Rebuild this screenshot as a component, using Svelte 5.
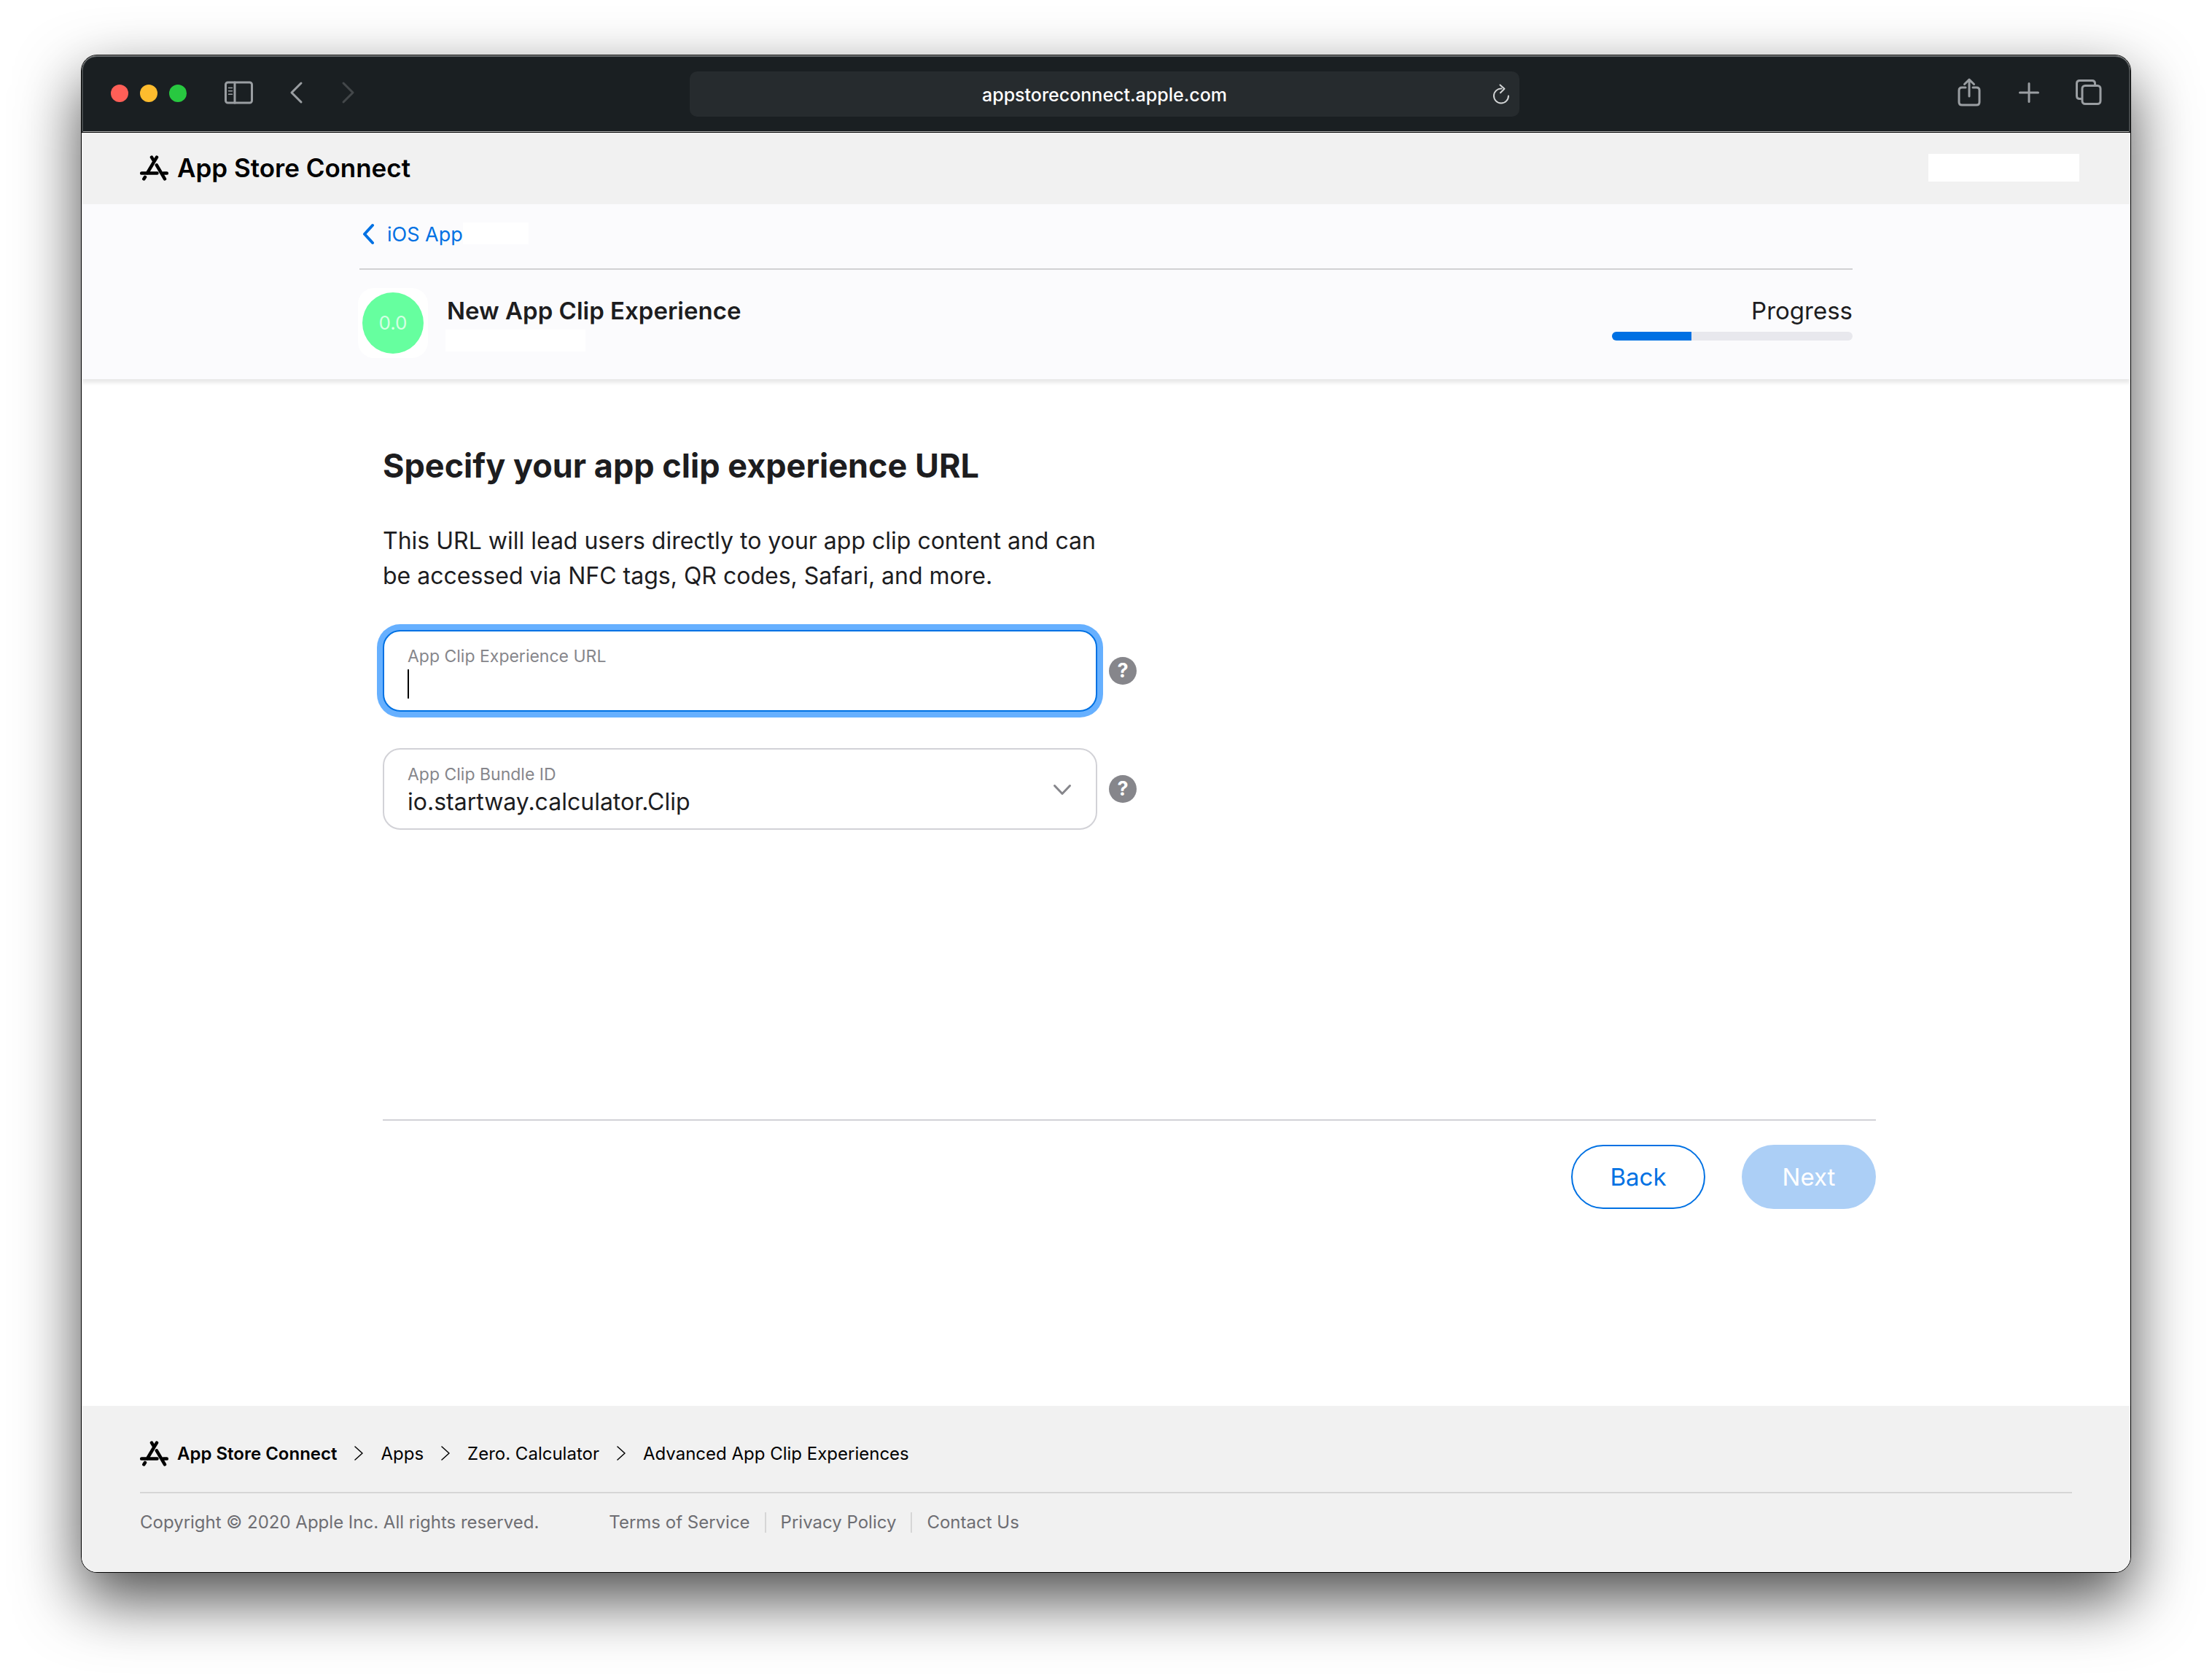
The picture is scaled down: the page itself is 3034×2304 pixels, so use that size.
<script>
  const crumbs = ['Apps', 'Zero. Calculator', 'Advanced App Clip Experiences'];
  const legal = ['Terms of Service', 'Privacy Policy', 'Contact Us'];
  const bundles = ['io.startway.calculator.Clip'];

  let url = $state('');
  let bundle = $state(bundles[0]);
  let progress = $state(33);
</script>

{#snippet logo()}
  <svg class="logo" viewBox="0 0 39 35" aria-hidden="true">
    <g class="heavy">
      <path d="M23 2.6 9.8 24.6M16 2.6l3 5M2.2 24.6h21.300M32 24.6h4.800M7 29.8 5.300 32.4" />
      <path d="M22.8 13.4 34 32.4" />
    </g>
  </svg>
{/snippet}

<div class="desktop">
  <div class="window">
    <div class="toolbar">
      <div class="side">
        <div class="lights">
          <button class="light red" aria-label="Close"></button>
          <button class="light yellow" aria-label="Minimize"></button>
          <button class="light green" aria-label="Zoom"></button>
        </div>
        <button class="tool sidebar" aria-label="Sidebar">
          <svg width="40" height="40" viewBox="0 0 40 40">
            <rect x="1.5" y="6" width="36" height="28" rx="3" />
            <path d="M14 6v28" />
            <path stroke-width="1.5" d="M5.5 13.5h5M5.5 17.8h5M5.5 22.2h5" />
          </svg>
        </button>
        <button class="tool back-nav" aria-label="Previous page">
          <svg width="20" height="40" viewBox="0 0 20 40"><path stroke-width="3" d="M16 7 3 20l13 13" /></svg>
        </button>
        <button class="tool forward-nav" aria-label="Next page" disabled>
          <svg width="20" height="40" viewBox="0 0 20 40"><path stroke-width="3" d="m3 7 13 13L3 33" /></svg>
        </button>
      </div>
      <div class="address">
        <span>appstoreconnect.apple.com</span>
        <button class="reload" aria-label="Reload">
          <svg width="24" height="28" viewBox="0 0 24 28">
            <path d="M12.5 6.5A10 10 0 1 0 22 16.5M10.5 1.5l6 5.3-5.5 5.4" />
          </svg>
        </button>
      </div>
      <div class="side end">
        <button class="tool" aria-label="Share">
          <svg width="38" height="40" viewBox="-3 0 38 40">
            <path d="M11 13H6q-4 0-4 4v16q0 4 4 4h20q4 0 4-4V17q0-4-4-4h-5M16 25V3M9.5 8.5 16 2.2l6.5 6.3" />
          </svg>
        </button>
        <button class="tool" aria-label="New tab">
          <svg width="38" height="40" viewBox="0 0 38 40"><path stroke-width="3" d="M19 7.5v25M6.5 20h25" /></svg>
        </button>
        <button class="tool" aria-label="Tab overview">
          <svg width="38" height="40" viewBox="0 0 38 40">
            <rect x="10" y="10.5" width="25" height="25" rx="4" />
            <path d="M9.500 28.5H6.500q-4 0-4-4v-17q0-4 4-4H23.500q4 0 4 4v3" />
          </svg>
        </button>
      </div>
    </div>

    <header class="masthead">
      <a class="brand" href="#home">{@render logo()}App Store Connect</a>
      <div class="account"></div>
    </header>

    <section class="subheader">
      <div class="column">
        <div class="crumb-row">
          <a class="up" href="#ios-app">
            <svg width="20" height="32" viewBox="0 0 20 32" aria-hidden="true"><path d="M15 4 4 16l11 12" /></svg>
            iOS App
          </a>
          <div class="app-name"></div>
        </div>
        <div class="title-row">
          <div class="app-icon"><span>0.0</span></div>
          <div class="titles">
            <h2>New App Clip Experience</h2>
            <div class="subtitle"></div>
          </div>
          <div class="progress">
            <span id="progress-label">Progress</span>
            <div class="track" role="progressbar" aria-labelledby="progress-label" aria-valuenow={progress} aria-valuemin="0" aria-valuemax="100">
              <div class="fill" style:width="{progress}%"></div>
            </div>
          </div>
        </div>
      </div>
    </section>

    <main>
      <div class="content">
        <h1>Specify your app clip experience URL</h1>
        <p>This URL will lead users directly to your app clip content and can be accessed via NFC tags, QR codes, Safari, and more.</p>

        <div class="field-row">
          <div class="field focused">
            <label for="clip-url">App Clip Experience URL</label>
            <div class="entry">
              <span class="caret"></span>
              <input id="clip-url" type="text" bind:value={url} />
            </div>
          </div>
          <button class="help" aria-label="About the experience URL">?</button>
        </div>

        <div class="field-row">
          <div class="field">
            <label for="clip-bundle">App Clip Bundle ID</label>
            <select id="clip-bundle" bind:value={bundle}>
              {#each bundles as id}
                <option value={id}>{id}</option>
              {/each}
            </select>
            <svg class="arrow" width="28" height="20" viewBox="0 0 28 20" aria-hidden="true"><path d="M3.5 4.5 14 15.5l10.5-11" /></svg>
          </div>
          <button class="help" aria-label="About the bundle ID">?</button>
        </div>

        <div class="actions">
          <button class="pill outline">Back</button>
          <button class="pill solid" disabled>Next</button>
        </div>
      </div>
    </main>

    <footer>
      <nav class="trail">
        <a class="root" href="#home">{@render logo()}App Store Connect</a>
        {#each crumbs as crumb}
          <svg class="sep" width="12" height="20" viewBox="0 0 12 20" aria-hidden="true"><path d="m1 1 10 9-10 9" /></svg>
          <a href="#{crumb}">{crumb}</a>
        {/each}
      </nav>
      <div class="legal">
        <span class="copyright">Copyright © 2020 Apple Inc. All rights reserved.</span>
        {#each legal as item}
          <a href="#{item}">{item}</a>
        {/each}
      </div>
    </footer>
  </div>
</div>

<style>
  :global(body) {
    background: #fff;
  }
  .desktop {
    box-sizing: border-box;
    min-height: 100vh;
    display: flex;
    padding: 75px 111px 147px;
    font-family: Inter, "Liberation Sans", sans-serif;
    color: #1d1d1f;
  }
  a {
    color: inherit;
    text-decoration: none;
  }
  button,
  input,
  select {
    font: inherit;
    color: inherit;
    margin: 0;
    padding: 0;
    border: 0;
    background: none;
    outline: none;
  }
  h1,
  h2,
  p {
    margin: 0;
  }
  svg {
    display: block;
    flex: none;
  }
  path,
  rect {
    fill: none;
    stroke: currentColor;
    stroke-linecap: round;
    stroke-linejoin: round;
  }
  .window {
    flex: 1;
    min-width: 0;
    display: flex;
    flex-direction: column;
    border: 1px solid #000;
    border-radius: 22px;
    overflow: hidden;
    background: #fff;
    box-shadow: 0 36px 86px rgba(0, 0, 0, 0.7);
  }

  .toolbar {
    display: grid;
    grid-template-columns: 1fr minmax(0, 1138px) 1fr;
    box-sizing: border-box;
    height: 106px;
    padding: 0 38px 0 34px;
    background: #1a1f22;
    border-bottom: 1px solid #000;
    border-radius: 21px 21px 0 0;
    box-shadow:
      inset 0 1px #8f9293,
      inset 0 2px #505456,
      inset 2px 0 #44484a,
      inset -2px 0 #44484a,
      inset 0 -1px #b5b5b5;
    align-items: center;
  }
  .side {
    display: flex;
    align-items: center;
    padding: 0 0 4px 6px;
    color: #9a9ea2;
  }
  .side.end {
    justify-content: flex-end;
    gap: 44px;
  }
  .lights {
    display: flex;
    gap: 16px;
    padding-top: 2px;
  }
  .light {
    width: 24px;
    height: 24px;
    border-radius: 50%;
  }
  .red {
    background: #ff5f57;
  }
  .yellow {
    background: #febc2e;
  }
  .green {
    background: #28c840;
  }
  .tool {
    stroke-width: 3px;
  }
  .sidebar {
    margin-left: 52px;
  }
  .back-nav {
    margin-left: 49px;
  }
  .forward-nav {
    margin-left: 51px;
    color: #43474a;
  }
  .address {
    position: relative;
    height: 62px;
    border-radius: 10px;
    background: #262b2e;
    color: #fff;
    font-size: 25px;
    font-weight: 500;
    line-height: 64px;
    text-align: center;
  }
  .reload {
    position: absolute;
    right: 13px;
    top: 17px;
    color: #d2d4d5;
    stroke-width: 2px;
  }

  .masthead {
    display: flex;
    justify-content: space-between;
    align-items: center;
    box-sizing: border-box;
    height: 98px;
    padding: 0 70px 2px 80px;
    background: #f1f1f1;
  }
  .logo {
    width: 39px;
    height: 35px;
  }
  .heavy {
    stroke-width: 4.5px;
  }
  .brand {
    display: flex;
    align-items: center;
    gap: 12px;
    color: #000;
    font-size: 35px;
    font-weight: 600;
  }
  .account {
    width: 207px;
    height: 38px;
    background: #fff;
  }

  .subheader {
    position: relative;
    background: #fbfbfd;
    box-shadow: 0 5px 5px rgba(0, 0, 0, 0.09);
  }
  .column {
    max-width: 2048px;
    height: 240px;
    margin: 0 auto;
  }
  .crumb-row {
    display: flex;
    box-sizing: border-box;
    height: 90px;
    padding: 25px 0 0 3px;
    border-bottom: 2px solid #d2d2d4;
  }
  .up {
    display: flex;
    align-items: center;
    gap: 15px;
    height: 32px;
    color: #0071e3;
    font-size: 27px;
  }
  .up svg {
    stroke-width: 4px;
  }
  .app-name {
    width: 90px;
    height: 30px;
    background: #fff;
  }
  .title-row {
    display: flex;
    padding-top: 25px;
  }
  .app-icon {
    display: flex;
    flex: none;
    width: 96px;
    height: 96px;
    margin-left: -2px;
    border-radius: 22px;
    background: #fff;
  }
  .app-icon span {
    width: 84px;
    margin: 6px;
    border-radius: 50%;
    background: #66ff9f;
    color: #d4ffe3;
    font-size: 26px;
    line-height: 84px;
    text-align: center;
  }
  .titles {
    flex: 1;
    padding-left: 24px;
  }
  h2 {
    padding: 11px 0 0 2px;
    font-size: 33px;
    font-weight: 600;
    line-height: 40px;
  }
  .subtitle {
    width: 192px;
    height: 30px;
    margin-top: 6px;
    background: #fff;
  }
  .progress {
    width: 330px;
    padding-top: 11px;
    font-size: 33px;
    line-height: 40px;
    text-align: right;
  }
  .track {
    height: 12px;
    margin-top: 9px;
    border-radius: 6px;
    overflow: hidden;
    background: #e8e8ed;
  }
  .fill {
    height: 12px;
    background: #0071e3;
  }

  main {
    flex: 1;
  }
  .content {
    box-sizing: border-box;
    max-width: 2112px;
    margin: 0 auto;
    padding: 90px 0 0 64px;
  }
  h1 {
    font-size: 45px;
    font-weight: 700;
    line-height: 58px;
  }
  p {
    max-width: 1010px;
    margin-top: 50px;
    font-size: 32px;
    line-height: 48px;
  }
  .field-row {
    display: flex;
    align-items: center;
    gap: 16px;
    margin-top: 50px;
  }
  .field {
    position: relative;
    display: flex;
    flex-direction: column;
    gap: 4px;
    box-sizing: border-box;
    width: 980px;
    height: 112px;
    padding: 20px 32px 0;
    border: 2px solid #d2d2d7;
    border-radius: 24px;
    background: #fff;
  }
  .focused {
    border-color: #0071e3;
    box-shadow: 0 0 0 8px #66b0ff;
  }
  .field label {
    color: #86868b;
    font-size: 23px;
    line-height: 28px;
  }
  .entry {
    display: flex;
  }
  .caret {
    width: 2px;
    height: 40px;
    background: #000;
  }
  .field input {
    flex: 1;
    caret-color: transparent;
    height: 40px;
    font-size: 32px;
  }
  .field select {
    height: 40px;
    appearance: none;
    font-size: 32px;
    line-height: 40px;
  }
  .arrow {
    position: absolute;
    right: 32px;
    top: 45px;
    color: #86868b;
    stroke-width: 3px;
    pointer-events: none;
  }
  .help {
    width: 38px;
    height: 38px;
    border-radius: 50%;
    background: #86868b;
    color: #fff;
    font-size: 27px;
    font-weight: 700;
    line-height: 38px;
  }
  .actions {
    display: flex;
    justify-content: flex-end;
    gap: 50px;
    margin-top: 397px;
    padding-top: 33px;
    border-top: 2px solid #d2d2d7;
  }
  .pill {
    box-sizing: border-box;
    width: 184px;
    height: 88px;
    border-radius: 44px;
    font-size: 33px;
  }
  .outline {
    border: 2px solid #0071e3;
    color: #0071e3;
  }
  .solid {
    background: #accff6;
    color: #fff;
  }

  footer {
    box-sizing: border-box;
    height: 228px;
    padding: 0 80px;
    background: #f1f1f1;
    font-size: 24px;
  }
  .trail {
    display: flex;
    align-items: center;
    gap: 24px;
    box-sizing: border-box;
    height: 120px;
    padding-top: 12px;
    border-bottom: 2px solid #d6d6d6;
    color: #000;
  }
  .root {
    display: flex;
    align-items: center;
    gap: 12px;
    font-weight: 600;
  }
  .sep {
    stroke-width: 1.5px;
  }
  .legal {
    display: flex;
    align-items: center;
    padding-top: 26px;
    color: #6e6e73;
    line-height: 28px;
  }
  .copyright {
    margin-right: 96px;
  }
  .legal a + a {
    margin-left: 20px;
    padding-left: 20px;
    border-left: 2px solid #d6d6d6;
  }
</style>
